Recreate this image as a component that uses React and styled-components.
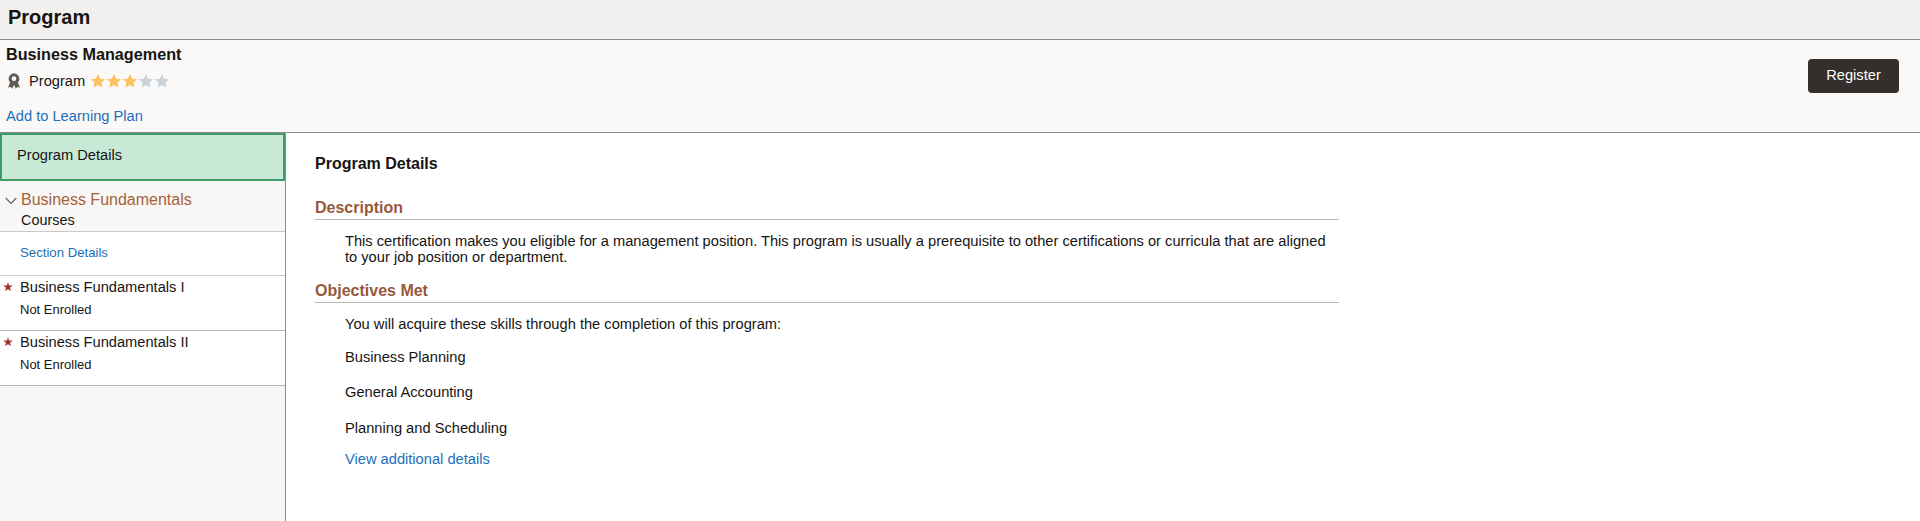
import React from "react";
import styled, { createGlobalStyle } from "styled-components";

const Global = createGlobalStyle`
  html, body { margin: 0; padding: 0; height: 100%; }
  body { font-family: "Liberation Sans", Arial, sans-serif; color: #161513; background: #fff; }
  #root { height: 100%; }
`;
const Page = styled.div`
  height: 521px; display: flex; flex-direction: column; overflow: hidden;
`;
const TitleBar = styled.header`
  height: 39px; box-sizing: content-box; display: flex; align-items: flex-start; padding-left: 8px;
  background: #f1efed; border-bottom: 1px solid #8f8a86;
`;
const Title = styled.h1`
  margin: 0; font-size: 20px; font-weight: 700; line-height: 34px;
`;
const Summary = styled.section`
  height: 92px; display: flex; justify-content: space-between; align-items: flex-start;
  background: #fbf9f8; border-bottom: 1px solid #8f8a86;
`;
const SummaryInfo = styled.div`
  display: flex; flex-direction: column; padding: 3px 0 0 6px;
`;
const Name = styled.div`
  font-size: 16.2px; font-weight: 700; line-height: 22px;
`;
const MetaRow = styled.div`
  display: flex; align-items: center; height: 22px; margin-top: 5px; font-size: 14.67px;
`;
const MetaIcon = styled.svg`
  width: 14px; height: 16px; margin: 0 8px 0 1px; flex: none;
`;
const Stars = styled.div`
  display: flex; margin-left: 5px;
`;
const Link = styled.a`
  color: #1b6fb8; font-size: ${p => p.$size || "14.67px"}; text-decoration: none; line-height: 16px;
`;
const PlanLink = styled(Link)`
  margin-top: 16px;
`;
const RegisterButton = styled.button`
  width: 91px; height: 34px; margin: 19px 21px 0 0; padding: 0 0 2px; border: 0; border-radius: 4px;
  background: #332f2c; color: #fff; font: 14.67px "Liberation Sans", Arial, sans-serif;
`;
const Body = styled.div`
  flex: 1; display: flex; min-height: 0;
`;
const Sidebar = styled.nav`
  width: 285px; flex: none; background: #f9f7f5; border-right: 1px solid #8f8a86;
`;
const SelectedItem = styled.div`
  height: 48px; box-sizing: border-box; display: flex; align-items: center; padding: 0 0 4px 15px;
  background: #c8e9d6; border: 2px solid #3f9a6a; font-size: 14.67px;
`;
const SectionHead = styled.div`
  height: 51px; box-sizing: border-box; padding: 9px 0 0 21px; position: relative;
  border-bottom: 1px solid #cbc8c5;
`;
const Chevron = styled.svg`
  position: absolute; left: 5px; top: 16px; width: 12px; height: 8px;
`;
const SectionName = styled.div`
  font-size: 16px; line-height: 20px; color: #a5623a;
`;
const SectionSub = styled.div`
  font-size: 14.4px; line-height: 20px;
`;
const DetailsRow = styled.div`
  height: 44px; box-sizing: border-box; padding: 12px 0 0 20px; background: #fff;
  border-bottom: 1px solid #cbc8c5; line-height: 16px;
`;
const CourseRow = styled.div`
  height: 55px; box-sizing: border-box; padding: 1px 0 0 20px; background: #fff; position: relative;
  border-bottom: 1px solid #b9b5b1;
`;
const Required = styled.svg`
  position: absolute; left: 3px; top: 6px; width: 10px; height: 10px;
`;
const CourseName = styled.div`
  font-size: 14.67px; line-height: 20px;
`;
const CourseStatus = styled.div`
  font-size: 13px; line-height: 16px; margin-top: 5px;
`;
const Content = styled.main`
  flex: 1; padding: 21px 0 0 29px; background: #fff;
`;
const Column = styled.div`
  width: 1024px;
`;
const ContentTitle = styled.h2`
  margin: 0 0 24px; font-size: 16px; font-weight: 700; line-height: 20px;
`;
const GroupHeading = styled.h3`
  margin: 0; padding-bottom: 1px; font-size: 16px; font-weight: 700; line-height: 20px; color: #96593a;
  border-bottom: 1px solid #b9b5b1;
`;
const Indented = styled.div`
  padding-left: 30px;
`;
const Paragraph = styled.p`
  margin: 13px 0 16px; font-size: 14.67px; line-height: 16px;
`;
const Skill = styled.div`
  font-size: 14.67px; line-height: 16px; margin-top: ${p => p.$gap}px;
`;
const DetailLink = styled(Link)`
  display: block; margin-top: 15px;
`;

const Star = ({ color }) => (
  <svg width="16" height="16" viewBox="0 0 16 16">
    <path fill={color} d="M8 1l2.2 4.7 5 .5-3.7 3.4 1.1 5L8 12l-4.6 2.6 1.1-5L.8 6.2l5-.5z" />
  </svg>
);

const courses = ["Business Fundamentals I", "Business Fundamentals II"];
const skills = [["Business Planning", 17], ["General Accounting", 19], ["Planning and Scheduling", 20]];

export default function App() {
  return (
    <Page>
      <Global />
      <TitleBar><Title>Program</Title></TitleBar>
      <Summary>
        <SummaryInfo>
          <Name>Business Management</Name>
          <MetaRow>
            <MetaIcon viewBox="0 0 14 16">
              <path fill="#5f5b58" d="M3.2 9l-2.1 5.4 2.6-.5 1.5 1.9L7 11.8l1.8 4 1.5-1.9 2.6.5L10.8 9z" />
              <path fill="#5f5b58" fillRule="evenodd" d="M7 .3a5.4 5.4 0 1 1 0 10.8A5.4 5.4 0 0 1 7 .3zm0 3a2.4 2.4 0 1 0 0 4.8 2.4 2.4 0 0 0 0-4.8z" />
            </MetaIcon>
            Program
            <Stars>
              <Star color="#fcc163" /><Star color="#fcc163" /><Star color="#fcc163" />
              <Star color="#c9d1d9" /><Star color="#c9d1d9" />
            </Stars>
          </MetaRow>
          <PlanLink href="#">Add to Learning Plan</PlanLink>
        </SummaryInfo>
        <RegisterButton>Register</RegisterButton>
      </Summary>
      <Body>
        <Sidebar>
          <SelectedItem>Program Details</SelectedItem>
          <SectionHead>
            <Chevron viewBox="0 0 12 8"><path d="M.7 1l5.3 5.5L11.3 1" fill="none" stroke="#66625f" strokeWidth="1.2" /></Chevron>
            <SectionName>Business Fundamentals</SectionName>
            <SectionSub>Courses</SectionSub>
          </SectionHead>
          <DetailsRow><Link href="#" $size="13.2px">Section Details</Link></DetailsRow>
          {courses.map((c) => (
            <CourseRow key={c}>
              <Required viewBox="0 0 10 10"><path fill="#a5332a" d="M5 .3l1.2 3.2 3.5.1L7 5.7l1 3.4L5 7.2 2 9.1l1-3.4L.3 3.6l3.5-.1z" /></Required>
              <CourseName>{c}</CourseName>
              <CourseStatus>Not Enrolled</CourseStatus>
            </CourseRow>
          ))}
        </Sidebar>
        <Content>
          <Column>
            <ContentTitle>Program Details</ContentTitle>
            <GroupHeading>Description</GroupHeading>
            <Indented>
              <Paragraph>This certification makes you eligible for a management position. This program is usually a prerequisite to other certifications or curricula that are aligned to your job position or department.</Paragraph>
            </Indented>
            <GroupHeading>Objectives Met</GroupHeading>
            <Indented>
              <Paragraph>You will acquire these skills through the completion of this program:</Paragraph>
              {skills.map(([s, g]) => <Skill key={s} $gap={g}>{s}</Skill>)}
              <DetailLink href="#">View additional details</DetailLink>
            </Indented>
          </Column>
        </Content>
      </Body>
    </Page>
  );
}
